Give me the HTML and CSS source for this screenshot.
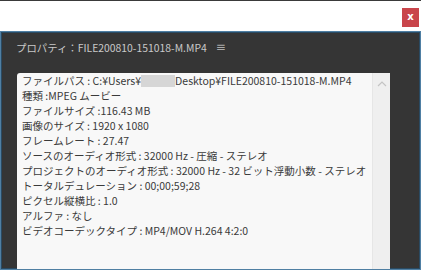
FILE: index.html
```html
<!DOCTYPE html>
<html lang="ja">
  <head>
    <meta charset="UTF-8" />
    <title>プロパティ</title>
    <link rel="stylesheet" href="styles.css">
  </head>
  <body>
    <div class="topbar">
      <div class="close">x</div>
    </div>
    <div class="panel">
      <div class="panel-title">
        <span>プロパティ：FILE200810-151018-M.MP4</span>
        <span class="menu">&#8801;</span>
      </div>
      <div class="props">
        <ul class="props-list">
          <li>ファイルパス : C:¥Users¥<span class="masked"></span>Desktop¥FILE200810-151018-M.MP4</li>
          <li>種類 :MPEG ムービー</li>
          <li>ファイルサイズ :116.43 MB</li>
          <li>画像のサイズ : 1920 x 1080</li>
          <li>フレームレート : 27.47</li>
          <li>ソースのオーディオ形式 : 32000 Hz - 圧縮 - ステレオ</li>
          <li>プロジェクトのオーディオ形式 : 32000 Hz - 32 ビット浮動小数 - ステレオ</li>
          <li>トータルデュレーション : 00;00;59;28</li>
          <li>ピクセル縦横比 : 1.0</li>
          <li>アルファ : なし</li>
          <li>ビデオコーデックタイプ : MP4/MOV H.264 4:2:0</li>
        </ul>
        <div class="scroll">
          <svg width="10" height="6" viewBox="0 0 10 6"><path d="M1 5 L5 1 L9 5" fill="none" stroke="#c4c4c4" stroke-width="1.2"/></svg>
        </div>
      </div>
    </div>
  </body>
</html>
```

FILE: styles.css
```css
body {
  margin: 0;
  background: #fff;
  font-family: "Noto Sans CJK JP", "Open Sans", sans-serif;
}
.topbar {
  height: 31px;
  border-top: 1px solid #3a3a3a;
  box-sizing: border-box;
  display: flex;
  justify-content: flex-end;
  padding: 7px 2px 0 0;
}
.close {
  width: 17px;
  height: 19px;
  background: #c9454b;
  color: #fff;
  font-family: "DejaVu Sans", sans-serif;
  font-size: 10px;
  font-weight: bold;
  text-align: center;
  line-height: 18px;
}
.panel {
  height: 239px;
  box-sizing: border-box;
  width: 421px;
  background: #353535;
  border: 1px solid #4f7fa3;
  box-shadow: inset 0 0 0 1px #2a4a62;
  display: flex;
  flex-direction: column;
}
.panel-title {
  color: #c9c9c9;
  font-size: 10.4px;
  padding: 8px 0 0 15px;
  height: 41px;
  box-sizing: border-box;
  display: flex;
  gap: 9px;
}
.menu {
  font-family: "DejaVu Sans", sans-serif;
  font-size: 12px;
  line-height: 14px;
  color: #aaa;
}
.props {
  flex: 1;
  margin-left: 16px;
  width: 373px;
  background: #f8f8f8;
  border-radius: 3px 3px 0 0;
  display: flex;
}
.props-list {
  list-style: none;
  margin: 0;
  padding: 0 0 0 5px;
  flex: 1;
  color: #3a3a3a;
  font-size: 10.5px;
  line-height: 15px;
  white-space: nowrap;
}
.masked {
  display: inline-block;
  width: 34px;
  height: 12px;
  vertical-align: -2px;
  background: #d6d6d6;
}
.scroll {
  width: 18px;
  background: #efefef;
  border-left: 1px solid #e6e6e6;
  display: flex;
  justify-content: center;
  padding-top: 8px;
  box-sizing: border-box;
}
```
